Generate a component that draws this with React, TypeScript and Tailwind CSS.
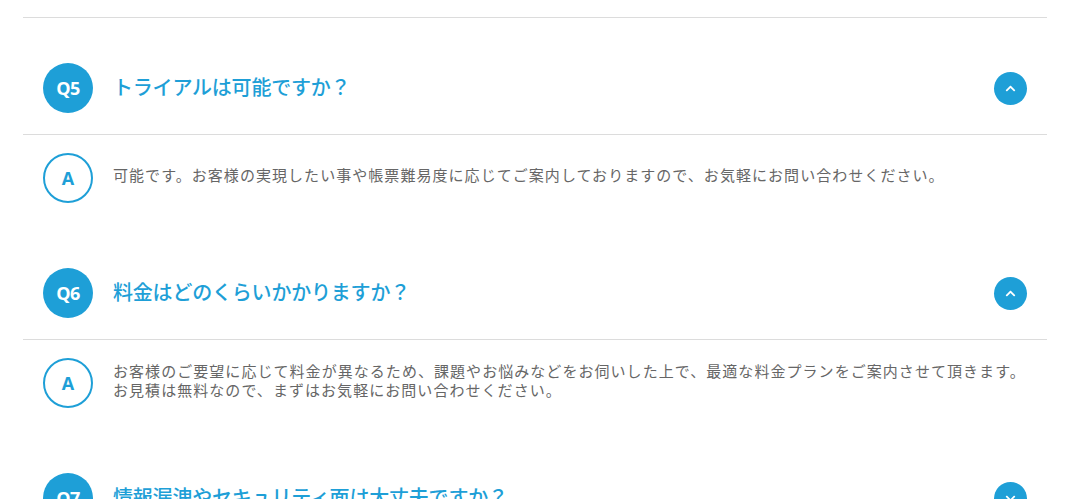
import { FaChevronUp, FaChevronDown } from "react-icons/fa";

const faqs = [
  {
    no: "Q5",
    q: "トライアルは可能ですか？",
    a: ["可能です。お客様の実現したい事や帳票難易度に応じてご案内しておりますので、お気軽にお問い合わせください。"],
    open: true,
  },
  {
    no: "Q6",
    q: "料金はどのくらいかかりますか？",
    a: [
      "お客様のご要望に応じて料金が異なるため、課題やお悩みなどをお伺いした上で、最適な料金プランをご案内させて頂きます。",
      "お見積は無料なので、まずはお気軽にお問い合わせください。",
    ],
    open: true,
  },
  {
    no: "Q7",
    q: "情報漏洩やセキュリティ面は大丈夫ですか？",
    a: ["お客様の情報は厳重に管理しております。"],
    open: false,
  },
];

const font = "font-['Open_Sans','Noto_Sans_CJK_JP',sans-serif]";

export default function App() {
  return (
    <div className={`w-[1078px] h-[499px] overflow-hidden bg-white ${font}`}>
      <div className="mx-[23px] w-[1024px]">
        {/* previous (collapsed) item */}
        <div className="h-[18px] border-b border-[#dcdcdc]" />

        <div className="flex flex-col gap-[24px] pt-[24px]">
          {faqs.map((item) => (
            <div key={item.no}>
              <div className="flex items-center py-[21px] pl-5 pr-[20px] border-b border-[#dcdcdc]">
                <div className="w-[50px] h-[50px] rounded-full bg-[#1e9fd7] flex items-center justify-center text-white font-bold text-[18px] tracking-tight shrink-0">
                  {item.no}
                </div>
                <div className="ml-5 flex-1 text-[20px] font-medium text-[#1e9fd7] tracking-[-0.01em]">
                  {item.q}
                </div>
                <button className="w-[33px] h-[33px] rounded-full bg-[#1e9fd7] flex items-center justify-center text-white">
                  {item.open ? <FaChevronUp size={11} /> : <FaChevronDown size={11} />}
                </button>
              </div>
              {item.open && (
                <div className="flex items-center pt-[18px] pb-[20px] px-5">
                  <div className="w-[50px] h-[50px] rounded-full border-2 border-[#1e9fd7] flex items-center justify-center text-[#1e9fd7] font-bold text-[18px] shrink-0">
                    A
                  </div>
                  <div className="ml-5 pb-[5px] text-[15px] leading-[19px] text-[#666666] tracking-[1.05px]">
                    {item.a.map((line) => (
                      <p key={line}>{line}</p>
                    ))}
                  </div>
                </div>
              )}
            </div>
          ))}
        </div>
      </div>
    </div>
  );
}
